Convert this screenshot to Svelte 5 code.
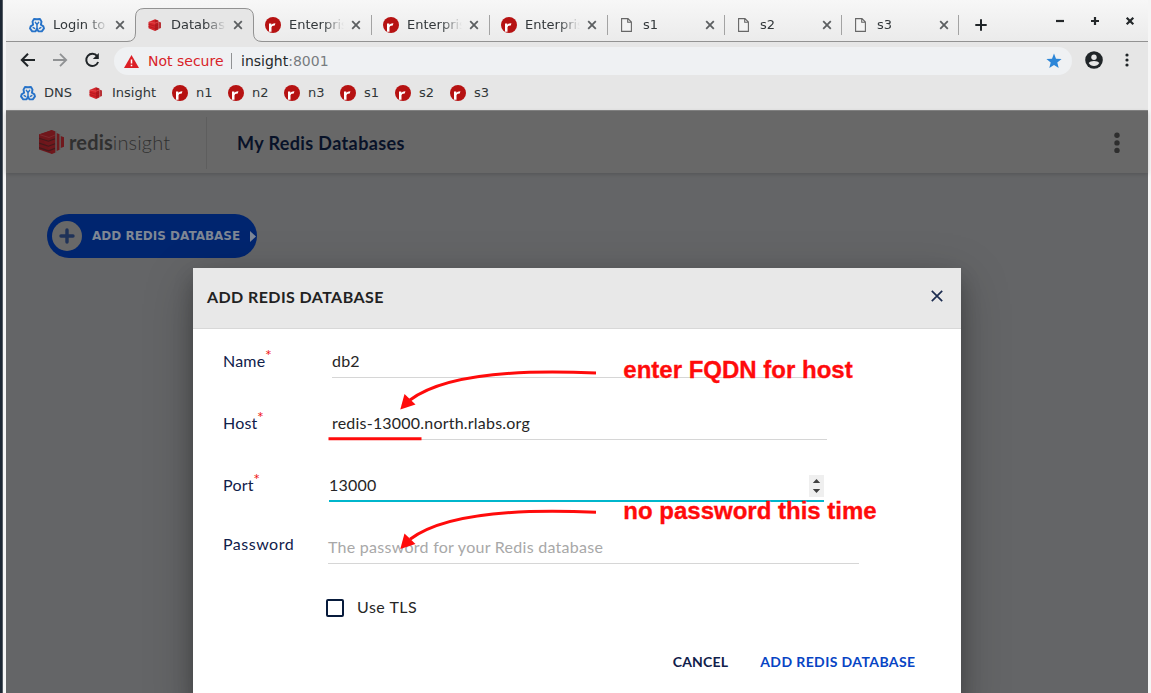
<script>
  const tabs = [
    { icon: 'dns', title: 'Login to', width: 118 },
    { icon: 'insight', title: 'Databas', width: 118, active: true },
    { icon: 'redis', title: 'Enterpris', width: 118, rule: true },
    { icon: 'redis', title: 'Enterpris', width: 118, rule: true },
    { icon: 'redis', title: 'Enterpris', width: 118, rule: true },
    { icon: 'page', title: 's1', width: 117, rule: true },
    { icon: 'page', title: 's2', width: 117, rule: true },
    { icon: 'page', title: 's3', width: 117, rule: true }
  ];
  const bookmarks = [
    { icon: 'dns', title: 'DNS', width: 68 },
    { icon: 'insight', title: 'Insight', width: 84 },
    { icon: 'redis', title: 'n1', width: 56 },
    { icon: 'redis', title: 'n2', width: 56 },
    { icon: 'redis', title: 'n3', width: 56 },
    { icon: 'redis', title: 's1', width: 55 },
    { icon: 'redis', title: 's2', width: 55 },
    { icon: 'redis', title: 's3', width: 55 }
  ];
</script>

{#snippet favicon(kind)}
  <svg class="favicon" viewBox="0 0 16 16">
    {#if kind === 'dns'}
      <g fill="none" stroke="#2672c8" stroke-width="1.9" stroke-linejoin="round" stroke-linecap="round">
        <path d="M8 11.8L6.6 14.2L3.2 14.4L1 11.4L1.6 9.4L4.1 7.8L3.5 4.6L5 2L8 2.2L11 2L12.5 4.6L11.9 7.8L14.4 9.4L15 11.4L12.8 14.4L9.4 14.2Z" />
        <path d="M8 7.6V11.5M8 7.6L6.4 5.4M8 7.6L9.6 5.4M4.2 10.6L5.6 11.4M11.8 10.6L10.4 11.4" stroke-width="1.5" />
      </g>
    {:else if kind === 'insight'}
      <path d="M1.5 5L8 2.2V13.9L1.5 11.3Z" fill="#d3242a" />
      <path d="M8 2.2L11.4 3.6V12.6L8 13.9Z" fill="#b5191f" />
      <path d="M11.4 4.4L14 5.4V11L11.4 12Z" fill="#b83136" />
      <path d="M1.5 7.3L8 9.1L11.3 7.8M1.5 9.5L8 11.5L11.3 10.2" stroke="#a6151b" stroke-width=".6" fill="none" />
      <path d="M2 5.1L8 6.2L11.2 5" stroke="#e95757" stroke-width=".7" fill="none" />
    {:else if kind === 'redis'}
      <circle cx="8" cy="8" r="8" fill="#b61212" />
      <path d="M4 6.6H6.3V7.7Q7.4 6.1 10.4 6.2L9.8 8.5Q6.6 8.4 6.5 10.2V14.8H4Z" fill="#fff" />
    {:else}
      <path d="M2.6 1.6H9L12.4 5V14.4H2.6ZM8.7 1.8V5.3H12.2" fill="#f4f4f4" stroke="#666" stroke-width="1.1" />
    {/if}
  </svg>
{/snippet}

<div class="desktop">
  <div class="browser">
    <header class="tabstrip">
      {#each tabs as tab}
        <div class="tab" class:ruled={tab.rule} style:width="{tab.width}px">
          {#if tab.active}
            <svg class="tab-shape" viewBox="0 0 135 35" width="135" height="35">
              <path d="M0 33.5Q8.5 33.5 8.5 25V9Q8.5 .5 17 .5H118Q126.5 .5 126.5 9V25Q126.5 33.5 135 33.5V35H0Z" fill="#e6e6e6" />
              <path d="M0 33.5Q8.5 33.5 8.5 25V9Q8.5 .5 17 .5H118Q126.5 .5 126.5 9V25Q126.5 33.5 135 33.5" fill="none" stroke="#929292" />
            </svg>
          {/if}
          {@render favicon(tab.icon)}
          <span class="tab-title">{tab.title}</span>
          <svg class="tab-close" viewBox="0 0 10 10"><path d="M1.2 1.2L8.8 8.8M8.8 1.2L1.2 8.8" /></svg>
        </div>
      {/each}
      <svg class="new-tab" viewBox="0 0 12 12"><path d="M6 .3V11.7M.3 6H11.7" /></svg>
      <div class="window-buttons">
        <svg viewBox="0 0 10 10"><path d="M1 5H9" /></svg>
        <svg viewBox="0 0 10 10"><path d="M1 5H9M5 1V9" /></svg>
        <svg viewBox="0 0 10 10"><path d="M1.7 1.7L8.3 8.3M8.3 1.7L1.7 8.3" /></svg>
      </div>
    </header>

    <nav class="toolbar">
      <svg class="nav-icon" viewBox="0 0 16 16"><path d="M15 8H2.2M8 1.8L1.8 8L8 14.2" stroke="#202528" stroke-width="2" fill="none" /></svg>
      <svg class="nav-icon" viewBox="0 0 16 16"><path d="M1 8H13.8M8 1.8L14.2 8L8 14.2" stroke="#909294" stroke-width="1.8" fill="none" /></svg>
      <svg class="nav-icon" viewBox="0 0 16 16"><path d="M13.2 4.2A6.1 6.1 0 1 0 14.1 10" stroke="#202528" stroke-width="2" fill="none" /><path d="M14.8 1V7H8.8Z" fill="#202528" /></svg>
      <div class="omnibox">
        <svg class="warning" viewBox="0 0 15 13"><path d="M7.5 0L15 13H0Z" fill="#dc1f26" /><path d="M7.5 4.6V8.5M7.5 9.7V11.3" stroke="#fff" stroke-width="1.5" /></svg>
        <span class="insecure">Not secure</span>
        <span class="omni-rule"></span>
        <span class="host">insight</span><span class="port">:8001</span>
        <svg class="star" viewBox="0 0 16 16"><path d="M8 .6L10 5.8L15.6 6.1L11.3 9.6L12.7 15L8 12L3.3 15L4.7 9.6L.4 6.1L6 5.8Z" fill="#2c86d8" /></svg>
      </div>
      <svg class="avatar" viewBox="0 0 18 18"><circle cx="9" cy="9" r="8.8" fill="#202528" /><circle cx="9" cy="6.2" r="2.7" fill="#e6e6e6" /><path d="M3.7 12.1Q5 9.9 9 9.9T14.3 12.1Q12.6 15.1 9 15.1T3.7 12.1Z" fill="#e6e6e6" /></svg>
      <svg class="kebab" viewBox="0 0 4 14"><circle cx="2" cy="2" r="1.6" /><circle cx="2" cy="7" r="1.6" /><circle cx="2" cy="12" r="1.6" /></svg>
    </nav>

    <div class="bookmarks">
      {#each bookmarks as mark}
        <div class="bookmark" style:width="{mark.width}px">{@render favicon(mark.icon)}<span>{mark.title}</span></div>
      {/each}
    </div>

    <main class="page">
      <div class="app-header">
        <svg class="logo" viewBox="0 0 26 26">
          <path d="M0 5.6L13 1V25L0 20.4Z" fill="#6c161b" />
          <path d="M0 5.6L13 1L16.5 2.4V23.6L13 25Z" fill="#70171c" />
          <path d="M0 9.2L9.5 12.2L16 9.8M0 14L9.5 17.2L16 14.8M0 18.6L9.5 21.8L16 19.4" stroke="#421a1c" stroke-width="1.2" fill="none" />
          <path d="M1 5.8L10 8.5L16 6" stroke="#7c2a2e" fill="none" />
          <path d="M17.6 4L20.6 5.3V20.7L17.6 22ZM21.7 7L25 8.2V17.8L21.7 19Z" fill="#70191d" />
          <path d="M17 2V24M21.1 5V21" stroke="#5c5c5c" stroke-width=".7" />
        </svg>
        <div class="brand"><b>redis</b><span>insight</span></div>
        <div class="header-rule"></div>
        <h1>My Redis Databases</h1>
        <svg class="page-menu" viewBox="0 0 6 22"><circle cx="3" cy="3.3" r="2.7" /><circle cx="3" cy="10.9" r="2.7" /><circle cx="3" cy="18.4" r="2.7" /></svg>
      </div>

      <button class="add-button">
        <span class="add-circle"><svg viewBox="0 0 16 16"><path d="M8 2V14M2 8H14" stroke="#1f3258" stroke-width="3.4" stroke-linecap="round" /></svg></span>
        <span class="add-text">ADD REDIS DATABASE</span>
        <svg class="add-arrow" viewBox="0 0 6 11"><path d="M0 0L6 5.5L0 11Z" /></svg>
      </button>

      <section class="modal">
        <div class="modal-header">
          <h2>ADD REDIS DATABASE</h2>
          <svg class="modal-close" viewBox="0 0 12 12"><path d="M.8 .8L11.2 11.2M11.2 .8L.8 11.2" /></svg>
        </div>
        <div class="form">
          <div class="row">
            <span class="label">Name<i>*</i></span>
            <div class="field inset"><span>db2</span></div>
          </div>
          <div class="row">
            <span class="label">Host<i>*</i></span>
            <div class="field inset"><span>redis-13000.north.rlabs.org</span></div>
          </div>
          <div class="row">
            <span class="label">Port<i>*</i></span>
            <div class="field focused">
              <span>13000</span>
              <svg class="spinner" viewBox="0 0 15 22"><rect width="15" height="22" fill="#efefef" /><path d="M3.8 8L7.5 4L11.2 8ZM3.8 14L7.5 18L11.2 14Z" fill="#404040" /></svg>
            </div>
          </div>
          <div class="row">
            <span class="label password">Password</span>
            <div class="field wide"><span class="placeholder">The password for your Redis database</span></div>
          </div>
          <div class="tls"><span class="checkbox"></span><span class="tls-text">Use TLS</span></div>
          <div class="actions"><span class="cancel">CANCEL</span><span class="submit">ADD REDIS DATABASE</span></div>
        </div>
      </section>
    </main>
  </div>

  <svg class="annotations" viewBox="0 0 1151 693" width="1151" height="693">
    <g fill="none" stroke="#ff0b0b" stroke-width="3">
      <path d="M596 373C510 369 442 376 410 400" />
      <path d="M596 512.3C510 508.3 442 515.3 410 539.3" />
      <path d="M328.5 438.8H421.5" />
    </g>
    <path d="M400.3 409.5L404.5 394L415.5 404.5Z" fill="#ff0b0b" />
    <path d="M400.3 549L404.5 533.5L415.5 544Z" fill="#ff0b0b" />
    <text x="623.3" y="378">enter FQDN for host</text>
    <text x="623.3" y="519">no password this time</text>
  </svg>
</div>

<style>
  :global(body) { margin: 0; overflow: hidden; }
  * { box-sizing: border-box; }
  svg { display: block; flex: none; }
  span { white-space: nowrap; }
  .desktop {
    position: relative; width: 1151px; height: 693px; overflow: hidden; padding: 0 3px 0 6px;
    background: linear-gradient(90deg, #1c2734 0 2px, #555c64 2px 3px, #f5f5f5 3px);
    font-family: "DejaVu Sans", sans-serif;
  }
  .browser { height: 693px; display: flex; flex-direction: column; background: #e6e6e6; }
  .tabstrip {
    height: 42px; flex: none; display: flex; align-items: flex-start; padding: 8px 0 0 12px;
    background: linear-gradient(#f7f7f7, #ebebeb); border-bottom: 1px solid #929292;
  }
  .tab { position: relative; height: 34px; flex: none; display: flex; align-items: center; padding-left: 11px; }
  .ruled::after { content: ""; position: absolute; right: 0; top: 7px; width: 1px; height: 20px; background: #a3a3a3; }
  .tab > .favicon, .tab-title, .tab-close { position: relative; }
  .tab-shape { position: absolute; left: -9px; top: 0; }
  .favicon { width: 16px; height: 16px; }
  .tab-title {
    width: 60px; margin-left: 8px; font-size: 13px; line-height: 18px; color: #33383b;
    -webkit-mask-image: linear-gradient(90deg, #000 34px, transparent 55px);
    mask-image: linear-gradient(90deg, #000 34px, transparent 55px);
  }
  .tab-close { width: 10px; height: 10px; margin-left: 2px; }
  .tab-close path { stroke: #5c5f61; stroke-width: 1.8; }
  .new-tab { width: 12px; height: 12px; margin: 11px 0 0 16px; }
  .new-tab path { stroke: #202528; stroke-width: 2; }
  .window-buttons { display: flex; gap: 25px; margin: 8px 13px 0 auto; }
  .window-buttons svg { width: 10px; height: 10px; }
  .window-buttons path { stroke: #24282a; stroke-width: 2.2; }

  .toolbar { height: 36px; flex: none; display: flex; align-items: center; padding: 0 19.5px 0 14px; }
  .nav-icon { width: 16px; height: 16px; margin-right: 16px; }
  .nav-icon:nth-child(3) { margin-right: 14px; }
  .omnibox { width: 958px; height: 28px; display: flex; align-items: center; margin-top: 2px; padding: 0 10px; border-radius: 14px; background: #eff1f3; font-size: 14px; }
  .warning { width: 15px; height: 13px; }
  .insecure { width: 83px; margin-left: 9px; color: #d82329; }
  .omni-rule { width: 1px; height: 16px; background: #909294; }
  .host { margin-left: 9px; color: #24292c; }
  .port { color: #777c80; }
  .star { width: 16px; height: 16px; margin-left: auto; }
  .avatar { width: 18px; height: 18px; margin-left: 13px; }
  .kebab { width: 4px; height: 14px; margin-left: auto; fill: #202528; }

  .bookmarks { height: 33px; flex: none; display: flex; align-items: center; padding: 0 0 3px 14px; border-bottom: 1px solid #868686; font-size: 13px; color: #303537; }
  .bookmark { display: flex; align-items: center; gap: 8px; }

  .page { position: relative; flex: 1; background: #646567; font-family: Lato, sans-serif; }
  .app-header { height: 62px; display: flex; align-items: center; padding: 2px 28px 0 33px; background: #686868; box-shadow: 0 1px 4px rgba(0, 0, 0, .18); }
  .logo { width: 26px; height: 26px; margin: -2px 4px 0 0; }
  .brand { width: 137px; margin-top: -2px; font: 20px Lato, sans-serif; color: #303030; white-space: nowrap; letter-spacing: .15px; }
  .brand span { font-weight: 300; }
  .header-rule { width: 1px; height: 52px; background: #5e5e5e; }
  h1 { margin: 0 0 0 30px; font-size: 18px; line-height: 24px; color: #081228; white-space: nowrap; letter-spacing: .38px; }
  .page-menu { width: 6px; height: 22px; margin-left: auto; fill: #2e2e2e; }
  .add-button { width: 210px; height: 44px; display: flex; align-items: center; margin: 41px 0 0 41px; padding: 0 0 0 5px; border: 0; border-radius: 22px; background: #00256f; }
  .add-circle { width: 30px; height: 30px; display: grid; place-items: center; border-radius: 50%; background: #686868; }
  .add-circle svg { width: 16px; height: 16px; }
  .add-text { width: 158px; margin-left: 10px; text-align: left; font: bold 12px "DejaVu Sans", sans-serif; color: #7f8794; }
  .add-arrow { width: 6px; height: 11px; fill: #7d8798; }

  .modal { position: absolute; left: 187px; top: 157px; width: 768px; height: 440px; background: #fff; box-shadow: 0 14px 45px rgba(0, 0, 0, .25), 0 10px 18px rgba(0, 0, 0, .22); }
  .modal-header { height: 61px; display: flex; justify-content: space-between; padding: 17px 18px 0 14px; background: #e8e8e8; border-bottom: 1px solid #d8d8d8; }
  h2 { margin: 0; font-size: 16px; line-height: 24px; color: #222; white-space: nowrap; letter-spacing: .42px; }
  .modal-close { width: 12px; height: 12px; margin-top: 5px; }
  .modal-close path { stroke: #1c2c50; stroke-width: 1.7; }
  .form { padding: 17px 0 0 30px; font-size: 16px; letter-spacing: .21px; color: #262626; }
  .row { height: 62px; display: flex; }
  .label { width: 105px; line-height: 20px; padding-top: 4px; color: #10204a; }
  .label i { font: 16px/10px Lato, sans-serif; color: #f01818; vertical-align: 6px; margin-left: -.5px; }
  .label.password { padding-top: 2px; letter-spacing: .5px; }
  .field { width: 496px; height: 32px; display: flex; align-items: center; padding-bottom: 2px; border-bottom: 1px solid #d6d6d6; line-height: 20px; }
  .inset { width: 495px; margin-left: 4px; }
  .focused { width: 495px; margin-left: 1px; padding-bottom: 0; border-bottom: 2px solid #00b6cc; }
  .wide { width: 531px; }
  .spinner { width: 15px; height: 22px; margin-left: auto; margin-top: 2px; }
  .placeholder { color: #a8a8a8; letter-spacing: .27px; }
  .tls { height: 36px; margin-top: -4px; display: flex; align-items: center; padding-left: 103px; }
  .checkbox { width: 18px; height: 18px; border: 2px solid #081b3c; border-radius: 2px; }
  .tls-text { margin: -4px 0 0 13px; letter-spacing: .5px; }
  .actions { display: flex; margin: 26px 45.5px 0 0; justify-content: flex-end; gap: 32px; font-size: 14px; font-weight: 700; line-height: 20px; }
  .cancel { color: #10204a; letter-spacing: .2px; }
  .submit { color: #0744c4; letter-spacing: .4px; }
  .annotations { position: absolute; inset: 0; }
  .annotations text { font: bold 24px "Liberation Sans", sans-serif; fill: #ff0b0b; stroke: #ff0b0b; stroke-width: .35px; }
</style>
